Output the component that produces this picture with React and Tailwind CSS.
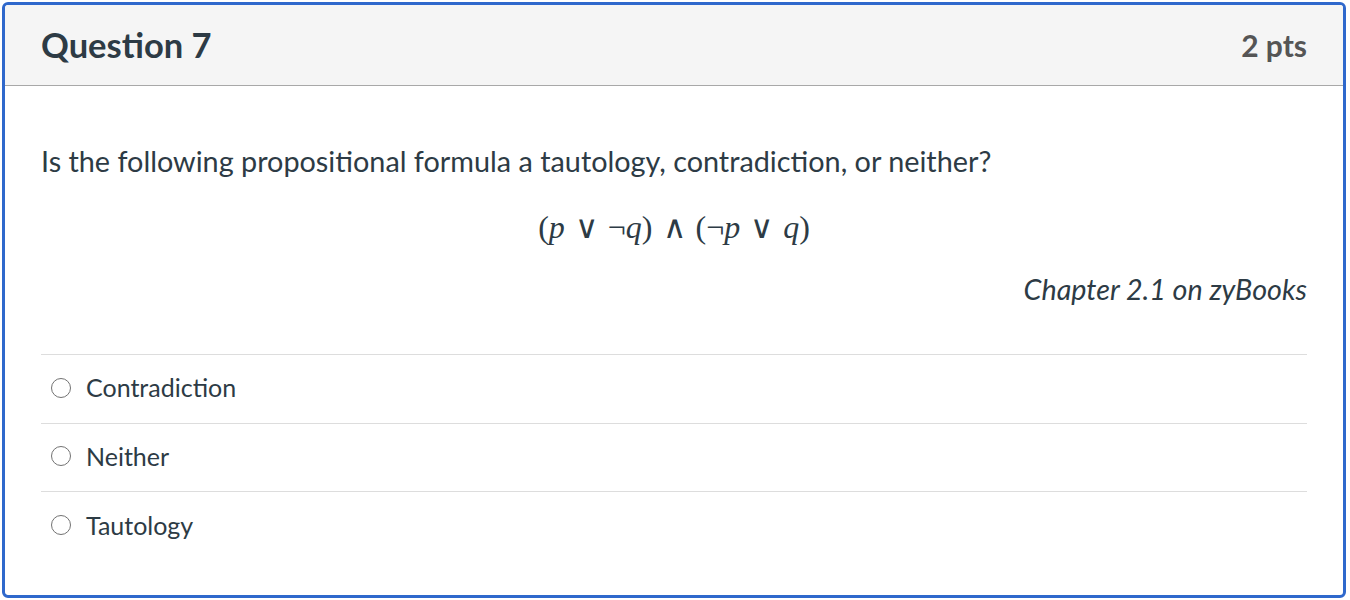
import React from 'react';

const answers = ['Contradiction', 'Neither', 'Tautology'];

function Radio() {
  return <span className="inline-block w-[20px] h-[20px] rounded-full border-[1.5px] border-[#727272] bg-white shrink-0" />;
}

function Op({ children }) {
  return (
    <span className="mx-[10px] not-italic font-extralight" style={{ fontFamily: '"DejaVu Sans", serif' }}>
      {children}
    </span>
  );
}

export default function App() {
  return (
    <div className="p-[2px] bg-white" style={{ fontFamily: 'Lato, "Noto Sans", sans-serif' }}>
      <div className="w-[1344px] h-[596px] border-[3px] border-[#2f68cc] rounded-[6px] overflow-hidden bg-white">
        {/* Header */}
        <div className="h-[81px] bg-[#f5f5f5] border-b border-[#a8a8a8] flex items-center justify-between px-[36px]">
          <h2 className="text-[34.5px] font-bold text-[#2d3b45]">Question 7</h2>
          <div className="text-[30px] font-bold text-[#555555]">2 pts</div>
        </div>

        {/* Body */}
        <div className="px-[36px] text-[#2d3b45]">
          <p className="text-[28.8px] mt-[57px] leading-[36px]">
            Is the following propositional formula a tautology, contradiction, or neither?
          </p>
          <div
            className="text-center text-[32px] mt-[30px] leading-[36px] text-[#2d3b45]"
            style={{ fontFamily: '"Liberation Serif", "DejaVu Serif", serif' }}
          >
            (<i>p</i>
            <Op>∨</Op>¬<i>q</i>)
            <Op>∧</Op>(¬<i>p</i>
            <Op>∨</Op>
            <i>q</i>)
          </div>
          <p className="text-right italic text-[28.7px] mt-[26px] leading-[36px]">Chapter 2.1 on zyBooks</p>

          <div className="mt-[47px] border-t border-[#dddddd]">
            {answers.map((a, i) => (
              <div
                key={a}
                className={`h-[68.5px] flex items-center gap-[15px] pl-[10px] pb-[2px] ${
                  i < answers.length - 1 ? 'border-b border-[#dddddd]' : ''
                }`}
              >
                <Radio />
                <span className="text-[25px] leading-none">{a}</span>
              </div>
            ))}
          </div>
        </div>
      </div>
    </div>
  );
}
